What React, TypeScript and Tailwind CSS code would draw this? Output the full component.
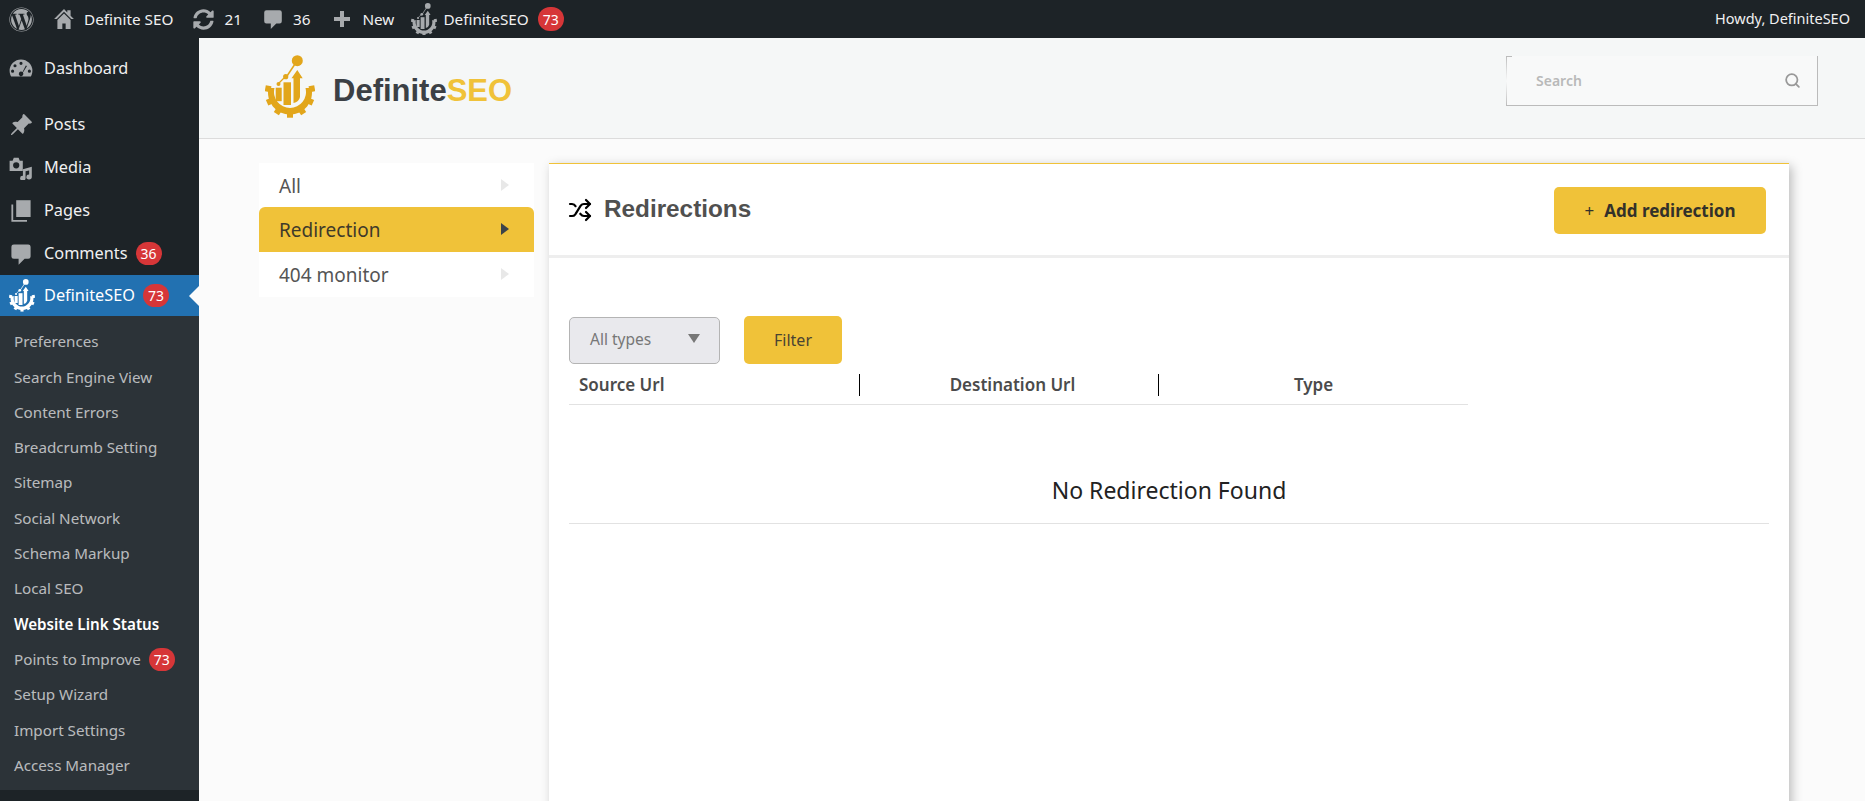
import React from 'react'
import { FaWordpress, FaSyncAlt } from 'react-icons/fa'
import { BsPinAngleFill } from 'react-icons/bs'
import { Search, Shuffle } from 'lucide-react'

const uiFont = 'font-["Noto_Sans",sans-serif]'

const Badge = ({ n, small }: { n: number; small?: boolean }) => (
  <span className={`inline-flex items-center justify-center rounded-full bg-[#d63638] text-white ${small ? 'h-[23px] w-[26px] text-[14px]' : 'h-[24px] w-[26px] text-[14px]'}`}>
    {n}
  </span>
)

const teeth = [-100, -66, -33, 0, 33, 66, 100]

const Logo = ({ color, size }: { color: string; size: number }) => (
  <svg viewBox="0 0 50 63" width={size} height={(size * 63) / 50} fill={color}>
    <circle cx="32.300" cy="5.700" r="5.500" />
    <path d="M30 9 22 21" stroke={color} strokeWidth="1.500" fill="none" />
    <circle cx="20.700" cy="21.700" r="2.600" />
    <path d="M19 23 14 28" stroke={color} strokeWidth="1.300" fill="none" />
    <circle cx="13.500" cy="29" r="2" />
    <rect x="10.700" y="32.700" width="6" height="13.500" />
    <rect x="18.500" y="27.300" width="7.500" height="22.700" />
    <path d="M28.500 48V23.300h-2L32.300 15l5.400 8.300H35V42q-1 5-6.500 6z" />
    <path d="M3.500 33A22 22 0 1 0 46.500 33L40.500 33A16 16 0 1 1 9.500 33z" />
    {teeth.map((a) => (
      <rect key={a} x="22" y="57" width="6" height="5.700" transform={`rotate(${a} 25 37.600)`} />
    ))}
  </svg>
)

const DashboardIcon = () => (
  <svg viewBox="0 0 20 20" className="h-[24px] w-[24px]" fill="#a7aaad">
    <path fillRule="evenodd" d="M10 2a9.500 9.500 0 0 0-9.500 9.500c0 1.800.5 3.400 1.300 4.800h16.400c.8-1.400 1.300-3 1.300-4.800A9.500 9.500 0 0 0 10 2zM10 4a1.300 1.300 0 1 1 0 2.600A1.300 1.300 0 0 1 10 4zM5 6a1.300 1.300 0 1 1 0 2.600A1.300 1.300 0 0 1 5 6zM3 10.500a1.300 1.300 0 1 1 0 2.600 1.300 1.300 0 0 1 0-2.600zm14 0a1.300 1.300 0 1 1 0 2.600 1.300 1.300 0 0 1 0-2.600zM14 7l1 .6-3.400 5.300a1.900 1.900 0 1 1-3.200.2 1.900 1.900 0 0 1 2.900-.7z" />
  </svg>
)

const MediaIcon = () => (
  <svg viewBox="0 0 20 20" className="h-[24px] w-[24px]" fill="#a7aaad">
    <path fillRule="evenodd" d="M.5 4H3l1-2.500h4L9 4h2.500v8.500H.5zM6 5.200a2.600 2.600 0 1 0 0 5.200 2.600 2.600 0 0 0 0-5.200z" />
    <path d="M19 9v8.500a2.300 2 0 1 1-2.200-2V12l-3 .8v5.700a2.300 2 0 1 1-2.200-2V11z" />
  </svg>
)

const PagesIcon = () => (
  <svg viewBox="0 0 20 20" className="h-[24px] w-[24px]" fill="#a7aaad">
    <path d="M6 1h12v14H6z" />
    <path d="M3.500 4.500v13H15V19H2V4.500z" />
  </svg>
)

const CommentIcon = ({ className }: { className: string }) => (
  <svg viewBox="0 0 20 20" className={className} fill="#a7aaad">
    <path d="M4 2h12a2 2 0 0 1 2 2v8a2 2 0 0 1-2 2h-3l-5 5v-5H4a2 2 0 0 1-2-2V4a2 2 0 0 1 2-2z" />
  </svg>
)

const HomeIcon = () => (
  <svg viewBox="0 0 20 20" className="h-[22px] w-[22px]" fill="#a7aaad">
    <path d="M10 1 1 10h2.500l6.500-6.500 6.500 6.500H19l-3-3V2h-3v2z" />
    <path d="M10 5 4 11v8h4.500v-5h3v5H16v-8z" />
  </svg>
)

const PlusIcon = () => (
  <svg viewBox="0 0 20 20" className="h-[20px] w-[20px]" fill="#a7aaad">
    <path d="M8 2h4v6h6v4h-6v6H8v-6H2V8h6z" />
  </svg>
)

const topMenu = [
  { name: 'Posts', icon: <BsPinAngleFill className="h-[24px] w-[24px] text-[#a7aaad]" /> },
  { name: 'Media', icon: <MediaIcon /> },
  { name: 'Pages', icon: <PagesIcon /> },
]

const subMenu = [
  'Preferences',
  'Search Engine View',
  'Content Errors',
  'Breadcrumb Setting',
  'Sitemap',
  'Social Network',
  'Schema Markup',
  'Local SEO',
  'Website Link Status',
  'Points to Improve',
  'Setup Wizard',
  'Import Settings',
  'Access Manager',
]

const TopBar = () => (
  <div className={`flex h-[38px] shrink-0 items-center bg-[#1d2327] pl-[9px] pr-[15px] text-[15.300px] text-[#f0f0f1] ${uiFont}`}>
    <FaWordpress className="h-[25px] w-[25px] text-[#a7aaad]" />
    <span className="ml-[19px] flex items-center gap-[9px]"><HomeIcon /> Definite SEO</span>
    <span className="ml-[20px] flex items-center gap-[10px]"><FaSyncAlt className="h-[21px] w-[21px] text-[#a7aaad]" /> 21</span>
    <span className="ml-[20px] flex items-center gap-[9px]"><CommentIcon className="h-[22px] w-[22px]" /> 36</span>
    <span className="ml-[22px] flex items-center gap-[10px]"><PlusIcon /> New</span>
    <span className="ml-[17px] flex items-center gap-[6px]">
      <Logo color="#a7aaad" size={26} />
      <span className="mr-[3px]">DefiniteSEO</span>
      <Badge n={73} />
    </span>
    <span className="ml-auto text-[14.500px]">Howdy, DefiniteSEO</span>
  </div>
)

const Sidebar = () => (
  <aside className={`flex w-[199px] shrink-0 flex-col bg-[#1d2327] text-[16.300px] text-[#f0f0f1] ${uiFont}`}>
    <div className="mb-[13px] mt-[9px] flex h-[43px] items-center gap-[11px] pl-[9px]">
      <DashboardIcon /> Dashboard
    </div>
    {topMenu.map((item) => (
      <div key={item.name} className="flex h-[43px] items-center gap-[11px] pl-[9px]">
        {item.icon} {item.name}
      </div>
    ))}
    <div className="flex h-[43px] items-center gap-[11px] pl-[9px]">
      <CommentIcon className="h-[24px] w-[24px]" />
      <span className="flex items-center gap-[8px]">Comments <Badge n={36} small /></span>
    </div>
    <div className="relative flex h-[41px] items-center gap-[9px] bg-[#2271b1] pl-[9px] text-white">
      <Logo color="#ffffff" size={26} />
      <span className="flex items-center gap-[8px]">DefiniteSEO <Badge n={73} small /></span>
      <span className="absolute right-0 top-1/2 h-0 w-0 -translate-y-1/2 border-y-[10px] border-r-[10px] border-y-transparent border-r-[#fbfbfb]" />
    </div>
    <div className="bg-[#2c3338] pb-[7px] pt-[8px] text-[15.200px] text-[#f0f0f1bb]">
      {subMenu.map((name) => (
        <div key={name} className={`flex h-[35.300px] items-center gap-[8px] pl-[14px] ${name === 'Website Link Status' ? 'font-semibold text-white' : ''}`}>
          {name}
          {name === 'Points to Improve' && <Badge n={73} small />}
        </div>
      ))}
    </div>
  </aside>
)

const Header = () => (
  <div className="flex h-[101px] shrink-0 items-start justify-between border-b border-[#dcdcdc] bg-[#f5f7f7] pl-[66px] pr-[47px]">
    <div className="mt-[17px] flex items-center gap-[18px]">
      <Logo color="#e2a61b" size={50} />
      <span className='pt-[10px] font-["Liberation_Sans",sans-serif] text-[31px] font-bold text-[#3b4045]'>
        Definite<span className="text-[#f0c239]">SEO</span>
      </span>
    </div>
    <div className={`relative mt-[18px] flex h-[50px] w-[312px] items-center justify-between border-b border-r border-[#bbbbbb] bg-[#f8f9f9] pl-[30px] pr-[16px] text-[14px] font-semibold text-[#b9b9b9] ${uiFont}`}>
      <span className="absolute left-0 top-0 h-px w-[6px] bg-[#bbbbbb]" />
      <span className="absolute left-0 top-0 h-[50px] w-px bg-gradient-to-b from-[#bbbbbb] via-transparent to-[#bbbbbb]" />
      Search
      <Search className="h-[17px] w-[17px] text-[#999999]" strokeWidth={2.500} />
    </div>
  </div>
)

const SideTabs = () => (
  <div className={`h-[134px] w-[275px] shrink-0 bg-white text-[19px] text-[#555555] ${uiFont}`}>
    {['All', 'Redirection', '404 monitor'].map((name) => {
      const active = name === 'Redirection'
      return (
        <div key={name} className={`flex items-center justify-between pl-[20px] pr-[25px] pt-[2px] ${name === 'All' ? 'h-[44px]' : 'h-[45px]'} ${active ? 'rounded-t-[6px] bg-[#f0c239] text-[#3f3a2a]' : ''}`}>
          {name}
          <span className={`mb-[3px] h-0 w-0 border-y-[6px] border-l-[8px] border-y-transparent ${active ? 'border-l-[#3c434a]' : 'border-l-[#e8e8e8]'}`} />
        </div>
      )
    })}
  </div>
)

const Panel = () => (
  <div className={`h-[700px] w-[1240px] shrink-0 border-t border-[#f0c239] bg-white shadow-[3px_3px_10px_rgba(0,0,0,0.25)] ${uiFont}`}>
    <div className="flex h-[94px] items-center justify-between border-b-[3px] border-[#eeeeee] pl-[19px] pr-[23px]">
      <div className="flex items-center gap-[12px]">
        <Shuffle className="h-[24px] w-[24px] text-black" strokeWidth={2.200} />
        <h1 className='font-["Liberation_Sans",sans-serif] text-[24.300px] font-bold text-[#50504f]'>Redirections</h1>
      </div>
      <button className="mt-[2px] flex h-[47px] w-[212px] items-center justify-center gap-[10px] rounded-[5px] bg-[#f0c239] text-[17px] font-bold text-[#33312a]">
        <span className="font-normal">+</span> Add redirection
      </button>
    </div>
    <div className="px-[20px] pt-[58px]">
      <div className="flex items-center gap-[24px]">
        <div className="flex h-[47px] w-[151px] items-center justify-between rounded-[5px] border border-[#b4b4b4] bg-[#e9e9ed] pl-[20px] pr-[19px] text-[15.500px] text-[#777777]">
          All types
          <span className="mb-[4px] h-0 w-0 border-x-[6px] border-t-[9px] border-x-transparent border-t-[#777777]" />
        </div>
        <button className="h-[48px] w-[98px] rounded-[5px] bg-[#f0c239] text-[16px] text-[#4a4433]">Filter</button>
      </div>
      <div className="mt-[6px] flex h-[35px] w-[899px] items-center border-b border-[#e2e2e2] pb-[4px] text-[17px] font-semibold text-[#4b4b4b]">
        <div className="w-[290px] pl-[10px]">Source Url</div>
        <div className="flex h-[22px] w-[299px] items-center justify-center border-l border-black pl-[7px]">Destination Url</div>
        <div className="flex h-[22px] flex-1 items-center justify-center border-l border-black">Type</div>
      </div>
      <div className="flex h-[119px] items-end justify-center border-b border-[#e2e2e2] pb-[16px] text-[23px] text-[#222222]">
        No Redirection Found
      </div>
    </div>
  </div>
)

export default function App() {
  return (
    <div className="flex h-[801px] w-[1865px] flex-col overflow-hidden bg-[#fbfbfb]">
      <TopBar />
      <div className="flex min-h-0 flex-1">
        <Sidebar />
        <main className="flex min-w-0 flex-1 flex-col">
          <Header />
          <div className="flex gap-[15px] pl-[60px] pt-[24px]">
            <SideTabs />
            <Panel />
          </div>
        </main>
      </div>
    </div>
  )
}
